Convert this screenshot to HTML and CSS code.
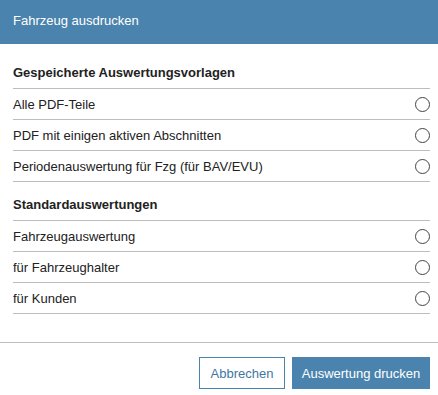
FILE: index.html
```html
<!DOCTYPE html>
<html lang="de">
<head>
    <meta charset="UTF-8">
    <meta name="viewport" content="width=device-width, initial-scale=1.0">
    <title>Fahrzeug ausdrucken</title>
    <link rel="stylesheet" href="styles.css">
</head>
<body>
    <div class="dialog">
        <div class="dialog-header">Fahrzeug ausdrucken</div>

        <div class="dialog-body">
            <div class="section-title">Gespeicherte Auswertungsvorlagen</div>
            <label class="option"><span>Alle PDF-Teile</span><span class="radio"></span></label>
            <label class="option"><span>PDF mit einigen aktiven Abschnitten</span><span class="radio"></span></label>
            <label class="option"><span>Periodenauswertung für Fzg (für BAV/EVU)</span><span class="radio"></span></label>

            <div class="section-title second">Standardauswertungen</div>
            <label class="option"><span>Fahrzeugauswertung</span><span class="radio"></span></label>
            <label class="option"><span>für Fahrzeughalter</span><span class="radio"></span></label>
            <label class="option"><span>für Kunden</span><span class="radio"></span></label>
        </div>

        <div class="dialog-footer">
            <button class="btn btn-outline">Abbrechen</button>
            <button class="btn btn-primary">Auswertung drucken</button>
        </div>
    </div>
</body>
</html>
```

FILE: styles.css
```css
body {
    margin: 0;
    font-family: "Liberation Sans", Arial, sans-serif;
    font-size: 13px;
    color: #222;
    background: white;
}
.dialog {
    width: 438px;
    height: 395px;
    background: white;
}
.dialog-header {
    height: 44px;
    line-height: 41px;
    padding: 0 13px;
    box-sizing: border-box;
    background: #4a83ad;
    color: white;
}
.dialog-body {
    padding: 14px 8px 28px 13px;
}
.section-title {
    font-weight: bold;
    line-height: 30px;
    border-bottom: 1px solid #bdbdbd;
}
.section-title.second {
    margin-top: 7px;
    line-height: 31px;
}
.option {
    display: flex;
    align-items: center;
    justify-content: space-between;
    height: 30px;
    border-bottom: 1px solid #bdbdbd;
    cursor: pointer;
}
.radio {
    width: 13px;
    height: 13px;
    border: 1px solid #444;
    border-radius: 50%;
}
.dialog-footer {
    display: flex;
    justify-content: flex-end;
    gap: 7px;
    padding: 14px 8px 0 0;
    border-top: 1px solid #bdbdbd;
}
.btn {
    height: 32px;
    padding: 0;
    font-family: inherit;
    font-size: 13px;
    border-radius: 0;
    cursor: pointer;
    white-space: nowrap;
}
.btn-outline {
    width: 86px;
    background: white;
    color: #3f77a3;
    border: 1px solid #4a83ad;
}
.btn-primary {
    width: 138px;
    background: #4a83ad;
    color: white;
    border: 1px solid #4a83ad;
}
.btn-primary:hover {
    background: #3f77a3;
}
```
